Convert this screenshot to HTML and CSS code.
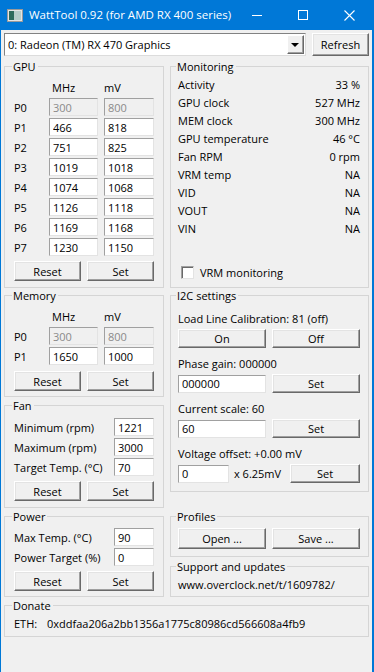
FILE: index.html
```html
<!DOCTYPE html>
<html lang="en">
<head>
    <meta charset="UTF-8">
    <meta name="viewport" content="width=device-width, initial-scale=1.0">
    <title>WattTool 0.92</title>
    <link rel="stylesheet" href="styles.css">
</head>
<body>
<div class="window">
    <div class="titlebar">
        <svg class="app-icon" width="16" height="13" viewBox="0 0 16 13">
            <rect x="0.5" y="0.5" width="15" height="12" fill="#e4e4e4" stroke="#9a9a9a"/>
            <rect x="2" y="2" width="5" height="9" fill="#2e6b5c"/>
            <rect x="7" y="2" width="7" height="9" fill="#b7cdc9"/>
        </svg>
        <span class="title">WattTool 0.92 (for AMD RX 400 series)</span>
        <div class="caption">
            <span class="cap-btn">
                <svg width="10" height="10" viewBox="0 0 10 10"><path d="M0 5.5H10" stroke="#fff" stroke-width="1"/></svg>
            </span>
            <span class="cap-btn">
                <svg width="10" height="10" viewBox="0 0 10 10"><rect x="0.5" y="0.5" width="9" height="9" fill="none" stroke="#fff"/></svg>
            </span>
            <span class="cap-btn">
                <svg width="11" height="11" viewBox="0 0 11 11"><path d="M0.5 0.5L10.5 10.5M10.5 0.5L0.5 10.5" stroke="#fff" stroke-width="1.1"/></svg>
            </span>
        </div>
    </div>

    <div class="content">
        <div class="toolbar">
            <div class="combo">
                <span class="combo-text">0: Radeon (TM) RX 470 Graphics</span>
                <span class="combo-arrow"></span>
            </div>
            <button class="btn refresh">Refresh</button>
        </div>

        <div class="columns">
            <div class="col">
                <div class="group gpu">
                    <div class="group-title">GPU</div>
                    <div class="pgrid">
                        <span></span><span class="head mhz">MHz</span><span class="head">mV</span>
                        <span>P0</span><input type="text" value="300" disabled><input type="text" value="800" disabled>
                        <span>P1</span><input type="text" value="466"><input type="text" value="818">
                        <span>P2</span><input type="text" value="751"><input type="text" value="825">
                        <span>P3</span><input type="text" value="1019"><input type="text" value="1018">
                        <span>P4</span><input type="text" value="1074"><input type="text" value="1068">
                        <span>P5</span><input type="text" value="1126"><input type="text" value="1118">
                        <span>P6</span><input type="text" value="1169"><input type="text" value="1168">
                        <span>P7</span><input type="text" value="1230"><input type="text" value="1150">
                    </div>
                    <div class="btn-row">
                        <button class="btn">Reset</button>
                        <button class="btn">Set</button>
                    </div>
                </div>

                <div class="group memory">
                    <div class="group-title">Memory</div>
                    <div class="pgrid">
                        <span></span><span class="head mhz">MHz</span><span class="head">mV</span>
                        <span>P0</span><input type="text" value="300" disabled><input type="text" value="800" disabled>
                        <span>P1</span><input type="text" value="1650"><input type="text" value="1000">
                    </div>
                    <div class="btn-row">
                        <button class="btn">Reset</button>
                        <button class="btn">Set</button>
                    </div>
                </div>

                <div class="group fan">
                    <div class="group-title">Fan</div>
                    <div class="fgrid">
                        <span>Minimum (rpm)</span><input type="text" value="1221">
                        <span>Maximum (rpm)</span><input type="text" value="3000">
                        <span>Target Temp. (°C)</span><input type="text" value="70">
                    </div>
                    <div class="btn-row">
                        <button class="btn">Reset</button>
                        <button class="btn">Set</button>
                    </div>
                </div>

                <div class="group power">
                    <div class="group-title">Power</div>
                    <div class="fgrid">
                        <span>Max Temp. (°C)</span><input type="text" value="90">
                        <span>Power Target (%)</span><input type="text" value="0">
                    </div>
                    <div class="btn-row">
                        <button class="btn">Reset</button>
                        <button class="btn">Set</button>
                    </div>
                </div>
            </div>

            <div class="col">
                <div class="group monitoring">
                    <div class="group-title">Monitoring</div>
                    <div class="mon">
                        <span>Activity</span><span class="val">33 %</span>
                        <span>GPU clock</span><span class="val">527 MHz</span>
                        <span>MEM clock</span><span class="val">300 MHz</span>
                        <span>GPU temperature</span><span class="val">46 °C</span>
                        <span>Fan RPM</span><span class="val">0 rpm</span>
                        <span>VRM temp</span><span class="val">NA</span>
                        <span>VID</span><span class="val">NA</span>
                        <span>VOUT</span><span class="val">NA</span>
                        <span>VIN</span><span class="val">NA</span>
                    </div>
                    <label class="check-row"><span class="check"></span>VRM monitoring</label>
                </div>

                <div class="group i2c">
                    <div class="group-title">I2C settings</div>
                    <div class="lbl">Load Line Calibration: 81 (off)</div>
                    <div class="ctrl-row two">
                        <button class="btn">On</button>
                        <button class="btn">Off</button>
                    </div>
                    <div class="lbl">Phase gain: 000000</div>
                    <div class="ctrl-row two">
                        <input type="text" value="000000">
                        <button class="btn">Set</button>
                    </div>
                    <div class="lbl">Current scale: 60</div>
                    <div class="ctrl-row two">
                        <input type="text" value="60">
                        <button class="btn">Set</button>
                    </div>
                    <div class="lbl">Voltage offset: +0.00 mV</div>
                    <div class="ctrl-row offset">
                        <input type="text" value="0">
                        <span class="unit">x 6.25mV</span>
                        <button class="btn">Set</button>
                    </div>
                </div>

                <div class="group profiles">
                    <div class="group-title">Profiles</div>
                    <div class="btn-row wide">
                        <button class="btn">Open ...</button>
                        <button class="btn">Save ...</button>
                    </div>
                </div>

                <div class="group support">
                    <div class="group-title">Support and updates</div>
                    <div class="line">www.overclock.net/t/1609782/</div>
                </div>
            </div>
        </div>

        <div class="group donate">
            <div class="group-title">Donate</div>
            <div class="line"><span class="eth">ETH:</span>0xddfaa206a2bb1356a1775c80986cd566608a4fb9</div>
        </div>
    </div>
</div>
</body>
</html>
```

FILE: styles.css
```css
* {
    box-sizing: border-box;
}
html, body {
    margin: 0;
    padding: 0;
}
body {
    width: 374px;
    height: 672px;
    overflow: hidden;
    background: #f0f0f0;
    font-family: 'Open Sans', 'Liberation Sans', sans-serif;
    font-size: 11px;
    color: #000;
}
.window {
    height: 672px;
    border-left: 1px solid #0078d7;
    border-right: 2px solid #0078d7;
}

/* title bar */
.titlebar {
    height: 30px;
    background: #0078d7;
    color: #fff;
    display: flex;
    align-items: center;
}
.app-icon {
    margin-left: 6px;
    margin-right: 6px;
    flex-shrink: 0;
}
.title {
    font-size: 11.5px;
    white-space: nowrap;
    margin-top: -1px;
}
.caption {
    margin-left: auto;
    display: flex;
    height: 30px;
}
.cap-btn {
    width: 46px;
    height: 30px;
    display: flex;
    align-items: center;
    justify-content: center;
}

/* content */
.content {
    padding: 3px 3px 0 3px;
}
.toolbar {
    display: flex;
    gap: 6px;
    height: 23px;
}
.combo {
    flex: 1;
    display: flex;
    align-items: center;
    background: #fff;
    border: 1px solid;
    border-color: #828282 #dcdcdc #dcdcdc #828282;
    padding: 0 1px 0 3px;
}
.combo-arrow {
    margin-left: auto;
    width: 17px;
    height: 19px;
    background: #f0f0f0;
    border: 1px solid;
    border-color: #fff #696969 #696969 #fff;
    box-shadow: inset -1px -1px #a0a0a0;
    display: flex;
    align-items: center;
    justify-content: center;
}
.combo-arrow::after {
    content: "";
    border-top: 4px solid #000;
    border-left: 4px solid transparent;
    border-right: 4px solid transparent;
    margin-right: 1px;
}
.btn {
    font-family: inherit;
    font-size: inherit;
    color: #000;
    height: 20px;
    padding: 0;
    background: #f0f0f0;
    border: 1px solid;
    border-color: #fff #696969 #696969 #fff;
    box-shadow: inset -1px -1px #a0a0a0, inset 1px 1px #e3e3e3;
}
.refresh {
    width: 57px;
    height: 23px;
}
input[type="text"] {
    font-family: inherit;
    font-size: inherit;
    color: #000;
    width: 100%;
    height: 18px;
    margin: 0;
    padding: 0 3px;
    background: #fff;
    border: 1px solid;
    border-color: #a0a0a0 #e3e3e3 #e3e3e3 #a0a0a0;
    outline: none;
}
input[type="text"]:disabled {
    background: #f0f0f0;
    color: #8a8a8a;
}

.columns {
    margin-top: 10px;
    display: grid;
    grid-template-columns: 160px 199px;
    column-gap: 6px;
}
.col {
    display: flex;
    flex-direction: column;
}

/* group boxes */
.group {
    border: 1px solid #d5d5d5;
    padding: 0 9px;
    display: flex;
    flex-direction: column;
}
.group-title {
    align-self: flex-start;
    height: 15px;
    line-height: 15px;
    margin: -8px 0 0 -2px;
    padding: 0 2px 0 1px;
    background: #f0f0f0;
}
.gpu { height: 222px; }
.memory { height: 102px; margin-top: 7px; }
.fan { height: 103px; margin-top: 8px; }
.power { height: 81px; margin-top: 8px; }
.monitoring { height: 222px; padding: 0 8px 7px 7px; }
.i2c { height: 197px; margin-top: 7px; padding: 0 8px 0 7px; }
.profiles { height: 41px; margin-top: 24px; padding: 0 8px 0 7px; }
.support { height: 31px; margin-top: 9px; padding: 0 8px 0 7px; }
.donate { height: 32px; margin-top: 8px; }

.pgrid {
    margin-top: 4px;
    display: grid;
    grid-template-columns: 29px 49px 50px;
    grid-auto-rows: 18px;
    column-gap: 6px;
    row-gap: 2px;
    align-items: center;
}
.head.mhz {
    padding-left: 3px;
}
.fgrid {
    margin-top: 5px;
    display: grid;
    grid-template-columns: 100px 40px;
    grid-auto-rows: 18px;
    row-gap: 2px;
    align-items: center;
}
.power .fgrid {
    margin-top: 4px;
}
.btn-row {
    margin-top: 5px;
    display: grid;
    grid-template-columns: 1fr 1fr;
    column-gap: 6px;
}
.memory .btn-row {
    margin-top: 6px;
}
.btn-row.wide {
    margin-top: 4px;
}
.btn-row.wide .btn {
    height: 21px;
}

.mon {
    margin-top: 1px;
    display: grid;
    grid-template-columns: 1fr auto;
    grid-auto-rows: 18px;
    align-items: center;
}
.val {
    text-align: right;
}
.check-row {
    margin-top: auto;
    height: 15px;
    display: flex;
    align-items: center;
}
.check {
    width: 13px;
    height: 13px;
    margin: 0 6px 0 3px;
    background: #fff;
    border: 1px solid;
    border-color: #a0a0a0 #e3e3e3 #e3e3e3 #a0a0a0;
    box-shadow: inset 1px 1px #696969;
}

.lbl {
    margin-top: 8px;
    line-height: 15px;
}
.ctrl-row {
    margin-top: 3px;
    height: 19px;
    display: grid;
    align-items: center;
    column-gap: 6px;
}
.ctrl-row .btn {
    height: 19px;
}
.ctrl-row.two {
    grid-template-columns: 1fr 1fr;
}
.ctrl-row.offset {
    grid-template-columns: 51px 1fr 70px;
    column-gap: 5px;
}

.line {
    margin-top: 3px;
    line-height: 15px;
    white-space: nowrap;
}
.eth {
    display: inline-block;
    width: 33px;
}
```
